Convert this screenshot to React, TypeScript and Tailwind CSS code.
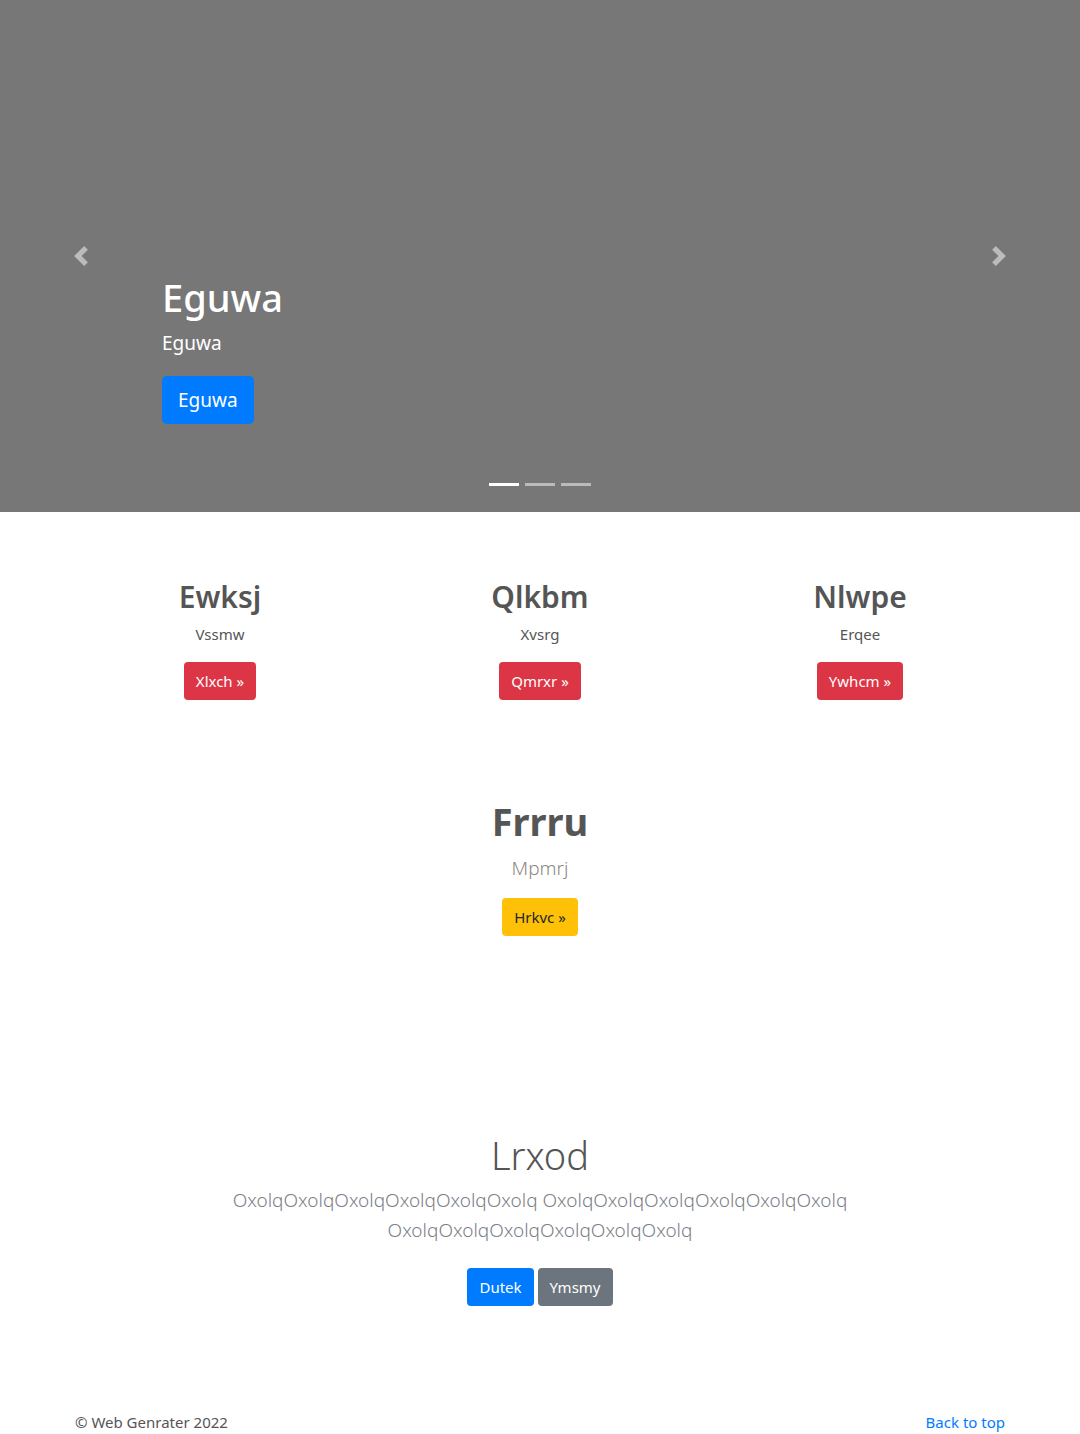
const font = { fontFamily: "'Segoe UI', 'Noto Sans', 'Open Sans', sans-serif" };

const features = [
  { title: "Ewksj", text: "Vssmw", cta: "Xlxch" },
  { title: "Qlkbm", text: "Xvsrg", cta: "Qmrxr" },
  { title: "Nlwpe", text: "Erqee", cta: "Ywhcm" },
];

function Chevron({ dir }: { dir: "prev" | "next" }) {
  return (
    <svg viewBox="0 0 8 8" className="w-5 h-5 opacity-50" fill="#fff">
      {dir === "prev" ? (
        <path d="M5.25 0l-4 4 4 4 1.5-1.5L4.25 4l2.5-2.5L5.25 0z" />
      ) : (
        <path d="M2.75 0l-1.5 1.5L3.75 4l-2.5 2.5L2.75 8l4-4-4-4z" />
      )}
    </svg>
  );
}

export default function App() {
  return (
    <div className="bg-white text-[#212529] min-h-[1434px]" style={font}>
      {/* Carousel */}
      <div className="relative h-[512px] bg-[#777777]">
        <div className="flex h-full">
          <button className="w-[162px] flex items-center justify-center">
            <Chevron dir="prev" />
          </button>
          <div className="flex-1 flex flex-col justify-end pb-[88px] text-white">
            <h1 className="text-[38px] leading-[48px] font-medium mb-[7px]">Eguwa</h1>
            <p className="text-[19px] leading-[30px] mb-[18px]">Eguwa</p>
            <div>
              <a className="inline-block bg-[#007bff] text-white text-[19px] leading-[30px] px-4 py-[9px] rounded-[5px]">
                Eguwa
              </a>
            </div>
          </div>
          <button className="w-[162px] flex items-center justify-center">
            <Chevron dir="next" />
          </button>
        </div>
        <div className="absolute bottom-[26px] left-0 right-0 flex justify-center gap-[6px]">
          <span className="w-[30px] h-[3px] bg-white" />
          <span className="w-[30px] h-[3px] bg-white/50" />
          <span className="w-[30px] h-[3px] bg-white/50" />
        </div>
      </div>

      {/* Marketing */}
      <div className="w-[960px] mx-auto pt-[66px]">
        <div className="grid grid-cols-3">
          {features.map((f) => (
            <div key={f.title} className="px-[15px] text-center text-[#555555]">
              <h2 className="text-[30px] leading-[38px] font-semibold mb-[6px]">{f.title}</h2>
              <p className="text-[15px] leading-[24px] mb-4">{f.text}</p>
              <a className="inline-block bg-[#dc3545] text-white text-[15px] leading-[24px] px-3 py-[7px] rounded-[4px]">
                {f.cta} »
              </a>
            </div>
          ))}
        </div>

        <div className="text-center mt-[97px]">
          <h2 className="text-[38px] leading-[48px] font-bold text-[#555555] mb-[8px]">Frrru</h2>
          <p className="text-[19px] leading-[30px] font-light text-[#8c8782] mb-[15px]">Mpmrj</p>
          <a className="inline-block bg-[#ffc107] text-[#212529] text-[15px] leading-[24px] px-3 py-[7px] rounded-[4px]">
            Hrkvc »
          </a>
        </div>

        <div className="text-center mt-[190px]">
          <h1 className="text-[38px] leading-[58px] font-light text-[#555555] mb-px">Lrxod</h1>
          <p className="w-[640px] mx-auto text-[19px] leading-[30px] font-light text-[#7a8087] mb-[23px]">
            OxolqOxolqOxolqOxolqOxolqOxolq OxolqOxolqOxolqOxolqOxolqOxolq OxolqOxolqOxolqOxolqOxolqOxolq
          </p>
          <div className="flex justify-center gap-1">
            <a className="inline-block bg-[#007bff] text-white text-[15px] leading-[24px] px-3 py-[7px] rounded-[4px]">
              Dutek
            </a>
            <a className="inline-block bg-[#6c757d] text-white text-[15px] leading-[24px] px-3 py-[7px] rounded-[4px]">
              Ymsmy
            </a>
          </div>
        </div>

        <footer className="flex justify-between px-[15px] mt-[104px] pb-6 text-[15px] leading-[24px]">
          <p className="text-[#555555]">© Web Genrater 2022</p>
          <a className="text-[#007bff]">Back to top</a>
        </footer>
      </div>
    </div>
  );
}
